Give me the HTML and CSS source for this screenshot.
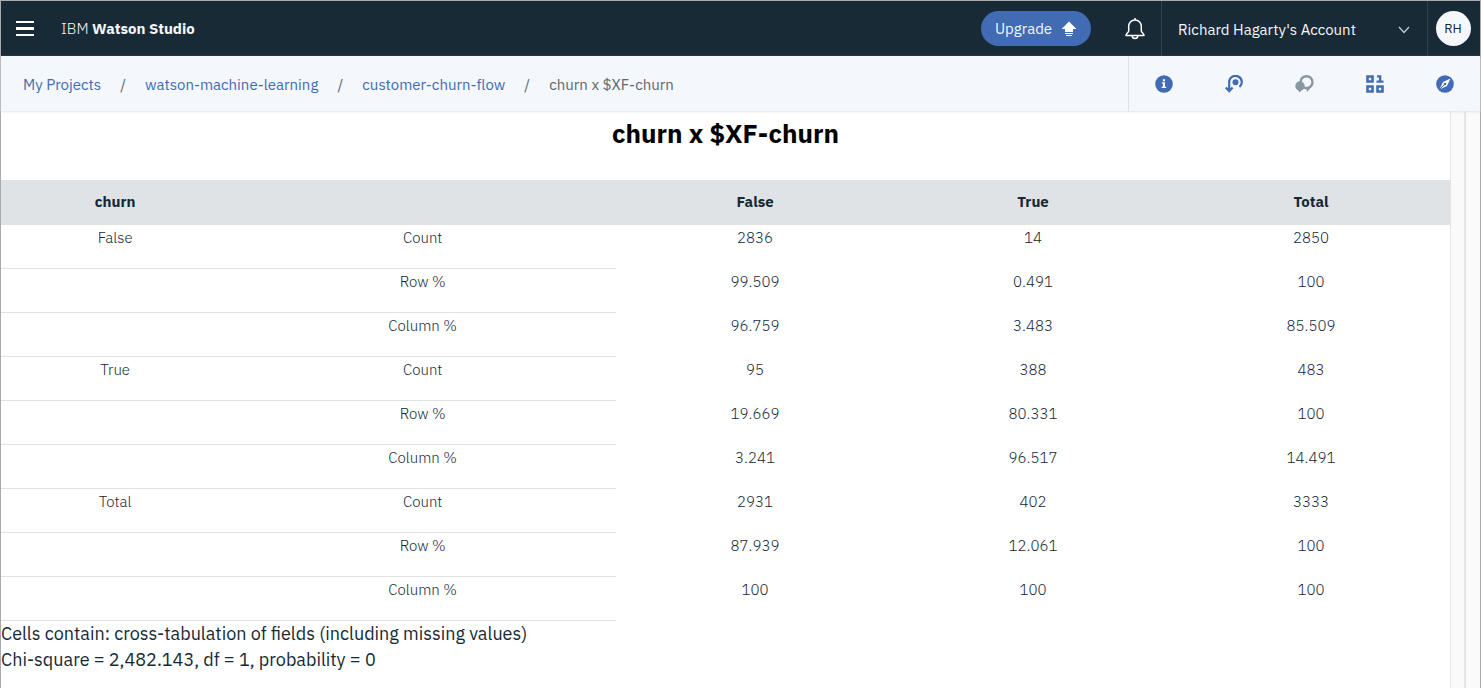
FILE: index.html
```html
<!DOCTYPE html>
<html lang="en">
<head>
<meta charset="utf-8">
<title>churn x $XF-churn</title>
<link rel="stylesheet" href="styles.css">
</head>
<body>
<div class="frame">
  <header class="topbar">
    <button class="menu" aria-label="Menu"><svg width="18" height="16" viewBox="0 0 18 16"><path d="M0 0h18v2H0zM0 6h18v3H0zM0 13h18v2H0z" fill="#fff"/></svg></button>
    <div class="brand">IBM <b>Watson Studio</b></div>
    <button class="upgrade">Upgrade
      <svg width="16" height="16" viewBox="0 0 16 16"><path d="M8 .5L15.500 8H12v3H4V8H.5zM4 12h8v1H4zM5 14h6v1H5z" fill="#fff"/></svg>
    </button>
    <button class="bell" aria-label="Notifications"><svg width="20" height="22" viewBox="0 0 20 22" fill="none" stroke="#fff" stroke-width="1.500" stroke-linejoin="round"><path d="M10 2C6 2 3.700 5 3.700 8.300V13c0 1.500-2.700 2.300-2.700 4.500h18c0-2.200-2.700-3-2.700-4.500V8.300C16.300 5 14 2 10 2zM10 0v2M7.200 17.700a2.800 2.800 0 0 0 5.600 0"/></svg></button>
    <button class="account"><span>Richard Hagarty's Account</span><svg width="12" height="8" viewBox="0 0 12 8" fill="none" stroke="#c6ced3" stroke-width="1.200"><path d="M1 1l5 5.500L11 1"/></svg></button>
    <button class="user" aria-label="Profile"><span class="avatar">RH</span></button>
  </header>
  <div class="subbar">
    <nav class="crumbs" aria-label="Breadcrumb">
      <a href="#">My Projects</a><span class="slash">/</span><a href="#">watson-machine-learning</a><span class="slash">/</span><a href="#">customer-churn-flow</a><span class="slash">/</span><span class="here">churn x $XF-churn</span>
    </nav>
    <div class="tools">
      <button aria-label="Information"><svg width="18" height="18" viewBox="0 0 18 18"><circle cx="9" cy="9" r="8.800" fill="#416bb3"/><path d="M7.800 4.200h2.200v2H7.800zM6.800 7.300H10v4.500h1.200v1.300H6.600v-1.300h1.300V8.600H6.800z" fill="#fff"/></svg></button>
      <button aria-label="Data"><svg width="18" height="18" viewBox="0 0 18 18"><circle cx="10.500" cy="7.300" r="3" fill="#416bb3"/><path d="M14.500 12A6.300 6.300 0 1 0 4.200 7.500V15M.8 12.500l3.400 3.700 3.400-3.700" fill="none" stroke="#416bb3" stroke-width="2.200"/></svg></button>
      <button aria-label="Comments"><svg width="19" height="18" viewBox="0 0 19 18"><circle cx="11.500" cy="7.200" r="6" fill="none" stroke="#8897a2" stroke-width="2.400"/><path d="M11 12l1.200 5 4-5z" fill="#8897a2"/><circle cx="5" cy="11" r="4.700" fill="#8897a2"/><path d="M2.500 14l2 3.500 3-3.500z" fill="#8897a2"/></svg></button>
      <button aria-label="Find data"><svg width="18" height="18" viewBox="0 0 18 18"><path d="M1.500 1.500h5v5h-5zM1.500 11.500h5v5h-5zM11.500 11.500h5v5h-5z" fill="none" stroke="#416bb3" stroke-width="2.600"/><path d="M11 .2h4.300V5.500h2.200v2.300h-7V5.500H13v-3h-2z" fill="#416bb3"/></svg></button>
      <button aria-label="Explore"><svg width="18" height="18" viewBox="0 0 18 18"><circle cx="9" cy="9" r="8.800" fill="#416bb3"/><path d="M14.500 3.500l-3.500 7.500-7.500 3.500L7 7z" fill="#fff"/><circle cx="9" cy="9" r="1.300" fill="#416bb3"/><path d="M4 14l5-5" stroke="#416bb3"/></svg></button>
    </div>
  </div>
  <div class="body">
    <main class="report">
      <h1>churn x $XF-churn</h1>
      <table>
        <colgroup><col class="c-field"><col class="c-stat"><col><col><col></colgroup>
        <thead><tr><th>churn</th><th></th><th>False</th><th>True</th><th>Total</th></tr></thead>
        <tbody>
          <tr><td>False</td><td>Count</td><td>2836</td><td>14</td><td>2850</td></tr>
          <tr><td></td><td>Row %</td><td>99.509</td><td>0.491</td><td>100</td></tr>
          <tr><td></td><td>Column %</td><td>96.759</td><td>3.483</td><td>85.509</td></tr>
          <tr><td>True</td><td>Count</td><td>95</td><td>388</td><td>483</td></tr>
          <tr><td></td><td>Row %</td><td>19.669</td><td>80.331</td><td>100</td></tr>
          <tr><td></td><td>Column %</td><td>3.241</td><td>96.517</td><td>14.491</td></tr>
          <tr><td>Total</td><td>Count</td><td>2931</td><td>402</td><td>3333</td></tr>
          <tr><td></td><td>Row %</td><td>87.939</td><td>12.061</td><td>100</td></tr>
          <tr><td></td><td>Column %</td><td>100</td><td>100</td><td>100</td></tr>
        </tbody>
      </table>
      <p>Cells contain: cross-tabulation of fields (including missing values)</p>
      <p>Chi-square = 2,482.143, df = 1, probability = 0</p>
    </main>
    <div class="track inner"></div>
    <div class="track"></div>
  </div>
</div>
</body>
</html>
```
FILE: styles.css
```css
* { box-sizing: border-box; }
body { margin: 0; font: 15px/20px "IBM Plex Sans", Roboto, sans-serif; color: #152935; background: #fff; }
button { border: 0; padding: 0; background: none; font: inherit; color: inherit; display: flex; align-items: center; justify-content: center; cursor: pointer; }
svg { flex: none; display: block; }
.frame { min-height: 100vh; border: 1px solid #aaa; border-bottom: 0; display: flex; flex-direction: column; }

.topbar { height: 55px; background: #182a35; color: #f4f7fb; display: flex; align-items: center; }
.menu { width: 48px; height: 100%; }
.brand { margin-left: 12px; flex: 1; font-weight: 300; }
.brand b { font-weight: 700; }
.upgrade { width: 110px; height: 35px; border-radius: 18px; background: #416bb3; gap: 9px; }
.bell { width: 70px; height: 100%; padding-left: 34px; justify-content: flex-start; }
.account { width: 266px; height: 100%; padding: 2px 17px 0 16px; border-left: 1px solid #32434e; justify-content: space-between; }
.user { width: 53px; height: 100%; padding-right: 2px; border-left: 1px solid #32434e; }
.avatar { width: 35px; height: 35px; border-radius: 50%; background: #f4f7fb; color: #152935; font-size: 13px; line-height: 35px; }

.subbar { height: 55px; background: #f4f7fb; display: flex; box-shadow: 0 1px 2px #dfe3e6; position: relative; }
.crumbs { flex: 1; display: flex; align-items: center; padding: 2px 0 0 22px; }
.crumbs a { color: #416bb3; text-decoration: none; }
.slash { width: 44px; text-align: center; color: #5a6872; }
.here { color: #5a6872; }
.tools { width: 352px; display: grid; grid-template-columns: repeat(5, 1fr); border-left: 1px solid #dfe3e6; }

.body { flex: 1; display: flex; }
.report { flex: 1; }
h1 { margin: 0; height: 69px; padding-top: 6px; text-align: center; color: #000; font-size: 26px; line-height: 32px; font-weight: 700; }
table { width: 100%; table-layout: fixed; border-collapse: separate; border-spacing: 0; text-align: center; }
.c-field { width: 15.75%; }
.c-stat { width: 26.7%; }
th { height: 45px; padding: 0 0 2px; background: #dfe3e6; font-weight: 700; }
td { height: 44px; padding: 3px 0 0; vertical-align: top; font-weight: 300; }
td:nth-child(-n+2) { border-bottom: 1px solid #dfe3e6; }
p { margin: 0; font-size: 18px; line-height: 26px; }
.track { width: 15px; border-left: 1px solid #e5e5e5; background: #fafafa; }
.inner { border-right: 1px solid #e5e5e5; }
```
